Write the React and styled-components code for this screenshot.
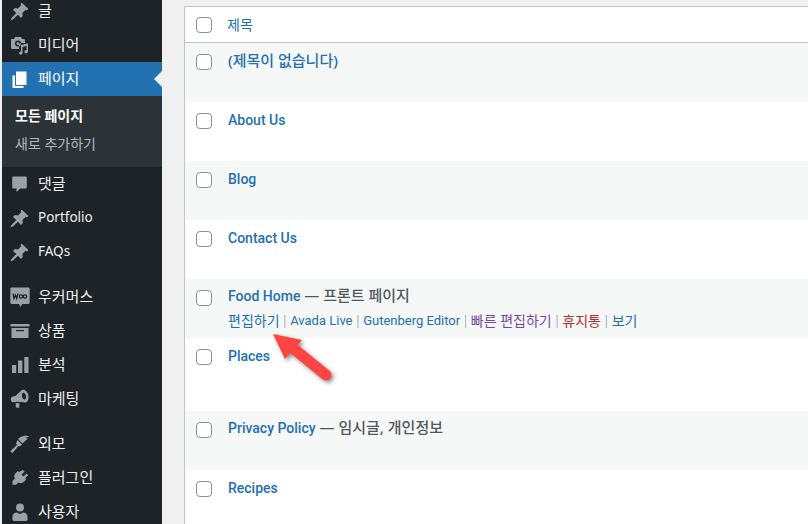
import React from "react";
import styled, { createGlobalStyle } from "styled-components";

const GlobalStyle = createGlobalStyle`
  html, body {
    margin: 0;
    height: 100%;
    overflow: hidden;
    background: #f0f0f1;
    font-family: "Noto Sans", "Noto Sans CJK KR", "Open Sans", sans-serif;
  }
`;

const PinIcon = () => (
  <svg viewBox="0 0 20 20" width="20" height="20" fill="#9ca1a6">
    <path d="M11.500 1.500l7 6.500-1.800 1.500-1-.7-3.300 3.300.4 3-1.800 1.800-3.100-3.200-4.900 4.700-2.500 1 1-2.500 4.800-4.800-3.300-3.200 1.800-1.800 3.100.4 3.300-3.300-.6-1z" />
  </svg>
);

const MediaIcon = () => (
  <svg viewBox="0 0 20 20" width="20" height="20" fill="#9ca1a6">
    <path fillRule="evenodd" d="M1 4h3l1-2h6l1 2h1.500c1 0 1.500.6 1.500 1.500V8h-3.500L9 9.500V14H2.500C1.600 14 1 13.400 1 12.500V4zm7 1.500a3 3 0 100 6 3 3 0 000-6z" />
    <circle cx="8" cy="8.500" r="1.500" />
    <path d="M11 10l7-1.800v8.300c0 1.100-.9 1.800-1.900 1.800s-1.700-.7-1.700-1.600.8-1.600 1.700-1.600h.5V11L12.500 12v6c0 1-.9 1.700-1.800 1.700S9 19 9 18.100s.8-1.600 2-1.600V10z" />
  </svg>
);

const PagesIcon = () => (
  <svg viewBox="0 0 20 20" width="20" height="20" fill="#fff">
    <path d="M6 2.500h10.500v13.500H6z" />
    <path d="M2.500 6.500H5V17h8.500v2h-11z" />
  </svg>
);

const CommentIcon = () => (
  <svg viewBox="0 0 20 20" width="20" height="20" fill="#9ca1a6">
    <path d="M3.500 2.500h12c.8 0 1.300.5 1.300 1.300v9.400c0 .8-.5 1.300-1.300 1.300h-5.200L6.500 18v-3.500h-3c-.8 0-1.300-.5-1.300-1.300V3.800c0-.8.5-1.300 1.300-1.300z" />
  </svg>
);

const WooIcon = () => (
  <svg viewBox="0 0 20 20" width="20" height="20">
    <path fill="#9ca1a6" d="M1.800 0.500h16.400c.8 0 1.500.7 1.500 1.500v13.500c0 .8-.7 1.500-1.500 1.500h-6l-1.700 3-1.500-3H1.800c-.8 0-1.500-.7-1.500-1.500V2c0-.8.700-1.500 1.500-1.500z" />
    <path fill="none" stroke="#1d2327" strokeWidth="1.300" d="M3 6.500l1 5 1.500-3.500 1.200 3.500 1.300-5" />
    <circle cx="11" cy="9.500" r="1.700" fill="none" stroke="#1d2327" strokeWidth="1.200" />
    <circle cx="15" cy="9.500" r="1.700" fill="none" stroke="#1d2327" strokeWidth="1.200" />
  </svg>
);

const ArchiveIcon = () => (
  <svg viewBox="0 0 20 20" width="20" height="20" fill="#9ca1a6">
    <path d="M0.500 3h19v2.500H.5z" />
    <path fillRule="evenodd" d="M1.500 7h17v10h-17zM6 9v1.300h8V9z" />
  </svg>
);

const ChartIcon = () => (
  <svg viewBox="0 0 20 20" width="20" height="20" fill="#9ca1a6">
    <path d="M2 10h4.200v8H2zM8 5.500h4.300V18H8zM14.300 2h4.200v16h-4.200z" />
  </svg>
);

const MegaphoneIcon = () => (
  <svg viewBox="0 0 20 20" width="20" height="20" fill="#9ca1a6">
    <g transform="rotate(-12 10 10)">
      <path fillRule="evenodd" d="M14.500 1.500c2.500 0 4.500 3 4.500 6.500s-2 6.500-4.500 6.500c-.5 0-1-.1-1.400-.4L6 12H3.500C2 12 .8 10.700.8 9s1.200-3 2.700-3H6l7.100-4.100c.4-.3.9-.4 1.400-.4zm0 3c-1 0-2 1.600-2 3.500s1 3.500 2 3.500 2-1.600 2-3.500-1-3.500-2-3.500z" />
      <path d="M5 13l3.500 1-1 4.500-2.500-.5-.8-1.200z" />
    </g>
  </svg>
);

const BrushIcon = () => (
  <svg viewBox="0 0 20 20" width="20" height="20" fill="#9ca1a6">
    <path d="M10.500 3l5-1.500 4 1-4.500 1.500 3 .5-5 4.500-.5.500L8 5z" />
    <path d="M7.500 6l4.500 4.500-2 2-1.500-.5-5.500 6.500c-.8.6-1.800.2-2.200-.5-.3-.6-.2-1.200.2-1.700L7 11l-1-1.500z" />
  </svg>
);

const PlugIcon = () => (
  <svg viewBox="0 0 20 20" width="20" height="20" fill="#9ca1a6">
    <path d="M12.800 2l1.700 1.600-3 3.100 2 1.900 3-3 1.600 1.700-3 3 1.100 1.200-2 2c-1.800 1.700-4 2-5.800.9l-2.400 2.400H2.500v-3.800l2.300-2.300c-1-1.900-.7-4 1-5.700l2-2 1.100 1.100z" />
  </svg>
);

const UserIcon = () => (
  <svg viewBox="0 0 20 20" width="20" height="20" fill="#9ca1a6">
    <circle cx="10" cy="5.500" r="4" />
    <path d="M2.500 14c0-2 2.500-3.500 4.500-3.500 1 .8 2 1.200 3 1.200s2-.4 3-1.200c2 0 4.500 1.500 4.500 3.500v3.500c0 .8-.7 1.500-1.500 1.500H4c-.8 0-1.500-.7-1.500-1.500z" />
  </svg>
);

const Arrow = () => (
  <svg viewBox="0 0 70 60" width="70" height="60">
    <path fill="none" stroke="#ff4444" strokeWidth="11" strokeLinecap="round" d="M24 16L56 42" />
    <path fill="#ff4444" d="M3 1L32 7 15 26z" />
  </svg>
);

const MenuEntry = ({ icon, label, latin, current, children }) => (
  <>
    <MenuItem $current={current}>
      <MenuIcon>{icon}</MenuIcon>
      <MenuLabel $latin={latin}>{label}</MenuLabel>
    </MenuItem>
    {children}
  </>
);

const PageRow = ({ title, state, hangul, alt, height, children }) => (
  <Row $alt={alt} $height={height}>
    <RowCheck />
    <RowBody $top={state ? 6 : hangul ? 7 : 8}>
      <RowTitle>
        <TitleLink $hangul={hangul}>{title}</TitleLink>
        {state && <TitleState> — {state}</TitleState>}
      </RowTitle>
      {children}
    </RowBody>
  </Row>
);

const App = () => {
  return (
    <>
      <GlobalStyle />
      <Page>
        <Sidebar>
          <Menu>
            <MenuEntry icon={<PinIcon />} label="글" />
            <MenuEntry icon={<MediaIcon />} label="미디어" />
            <MenuEntry icon={<PagesIcon />} label="페이지" current>
              <Submenu>
                <SubItem $active>모든 페이지</SubItem>
                <SubItem>새로 추가하기</SubItem>
              </Submenu>
            </MenuEntry>
            <MenuEntry icon={<CommentIcon />} label="댓글" />
            <MenuEntry icon={<PinIcon />} label="Portfolio" latin />
            <MenuEntry icon={<PinIcon />} label="FAQs" latin />
            <MenuGap />
            <MenuEntry icon={<WooIcon />} label="우커머스" />
            <MenuEntry icon={<ArchiveIcon />} label="상품" />
            <MenuEntry icon={<ChartIcon />} label="분석" />
            <MenuEntry icon={<MegaphoneIcon />} label="마케팅" />
            <MenuGap />
            <MenuEntry icon={<BrushIcon />} label="외모" />
            <MenuEntry icon={<PlugIcon />} label="플러그인" />
            <MenuEntry icon={<UserIcon />} label="사용자" />
          </Menu>
        </Sidebar>
        <Content>
          <Table>
            <HeaderRow>
              <RowCheck $header />
              <HeaderTitle>제목</HeaderTitle>
            </HeaderRow>
            <PageRow title="(제목이 없습니다)" hangul alt />
            <PageRow title="About Us" />
            <PageRow title="Blog" alt />
            <PageRow title="Contact Us" />
            <PageRow title="Food Home" state="프론트 페이지" alt>
              <Actions>
                <Action $hangul>편집하기</Action>
                <Sep>|</Sep>
                <Action>Avada Live</Action>
                <Sep>|</Sep>
                <Action>Gutenberg Editor</Action>
                <Sep>|</Sep>
                <Action $hangul $color="#74479f">빠른 편집하기</Action>
                <Sep>|</Sep>
                <Action $hangul $color="#b32d2e">휴지통</Action>
                <Sep>|</Sep>
                <Action $hangul>보기</Action>
              </Actions>
            </PageRow>
            <PageRow title="Places" height={73} />
            <PageRow title="Privacy Policy" state="임시글, 개인정보" alt />
            <PageRow title="Recipes" />
            <ArrowMark>
              <Arrow />
            </ArrowMark>
          </Table>
        </Content>
      </Page>
    </>
  );
};

export default App;

const Page = styled.div`
  display: flex;
  width: 808px;
  height: 524px;
  overflow: hidden;
  background: #f0f0f1;
`;

const Sidebar = styled.nav`
  flex: 0 0 160px;
  margin-left: 2px;
  height: 524px;
  overflow: hidden;
  background: #1d2327;
`;

const Menu = styled.div`
  display: flex;
  flex-direction: column;
  margin-top: -6px;
`;

const MenuItem = styled.div`
  position: relative;
  display: flex;
  flex: 0 0 34px;
  align-items: center;
  height: 34px;
  padding-left: 8px;
  background: ${(p) => (p.$current ? "#2271b1" : "transparent")};
  color: ${(p) => (p.$current ? "#fff" : "#f0f0f1")};

  ${(p) =>
    p.$current &&
    `
    &::after {
      content: "";
      position: absolute;
      right: 0;
      top: 9px;
      border: 8px solid transparent;
      border-right-color: #f0f0f1;
    }
  `}
`;

const MenuIcon = styled.span`
  display: flex;
  flex: 0 0 28px;
`;

const MenuLabel = styled.span`
  font-size: ${(p) => (p.$latin ? "13.5px" : "15px")};
  line-height: 18px;
  position: relative;
  top: -1px;
`;

const Submenu = styled.div`
  display: flex;
  flex-direction: column;
  padding: 6px 0 9px;
  background: #2c3338;
`;

const SubItem = styled.div`
  height: 28px;
  padding-left: 13px;
  font-size: 14px;
  line-height: 28px;
  font-weight: ${(p) => (p.$active ? 700 : 400)};
  color: ${(p) => (p.$active ? "#fff" : "rgba(240, 246, 252, 0.7)")};
`;

const MenuGap = styled.div`
  flex: 0 0 11px;
`;

const Content = styled.main`
  flex: 1;
  padding: 6px 0 0 22px;
`;

const Table = styled.div`
  position: relative;
  border-top: 1px solid #c3c4c7;
  border-left: 1px solid #c3c4c7;
  background: #fff;
`;

const HeaderRow = styled.div`
  display: flex;
  align-items: center;
  height: 35px;
  padding-left: 11px;
  border-bottom: 1px solid #c3c4c7;
`;

const HeaderTitle = styled.span`
  position: relative;
  top: -1px;
  margin-left: 15px;
  font-size: 14px;
  color: #2271b1;
`;

const RowCheck = styled.span`
  flex: 0 0 auto;
  box-sizing: border-box;
  width: 16px;
  height: 16px;
  margin-top: ${(p) => (p.$header ? 0 : "11px")};
  border: 1px solid #8c8f94;
  border-radius: 4px;
  background: #fff;
`;

const Row = styled.div`
  display: flex;
  height: ${(p) => p.$height || 59}px;
  padding-left: 11px;
  background: ${(p) => (p.$alt ? "#f6f7f7" : "#fff")};
`;

const RowBody = styled.div`
  margin-left: 16px;
  padding-top: ${(p) => p.$top}px;
`;

const RowTitle = styled.div`
  display: flex;
  align-items: baseline;
  height: 20px;
  line-height: 20px;
  white-space: pre;
`;

const TitleLink = styled.span`
  font-family: ${(p) => (p.$hangul ? "inherit" : "Roboto, sans-serif")};
  font-size: ${(p) => (p.$hangul ? "15px" : "14px")};
  font-weight: 500;
  color: #2271b1;
`;

const TitleState = styled.span`
  font-size: 15px;
  font-weight: 500;
  color: #50575e;
`;

const Actions = styled.div`
  display: flex;
  align-items: center;
  gap: 2px;
  margin-top: 6px;
  line-height: 20px;
  white-space: nowrap;
`;

const Action = styled.span`
  font-family: ${(p) => (p.$hangul ? "inherit" : "Roboto, sans-serif")};
  font-size: ${(p) => (p.$hangul ? "14px" : "13px")};
  color: ${(p) => p.$color || "#2271b1"};
`;

const Sep = styled.span`
  font-size: 12px;
  color: #a7aaad;
`;

const ArrowMark = styled.div`
  position: absolute;
  left: 85px;
  top: 326px;
  width: 70px;
  height: 60px;
  filter: drop-shadow(2px 2px 2px rgba(0, 0, 0, 0.45));
`;
